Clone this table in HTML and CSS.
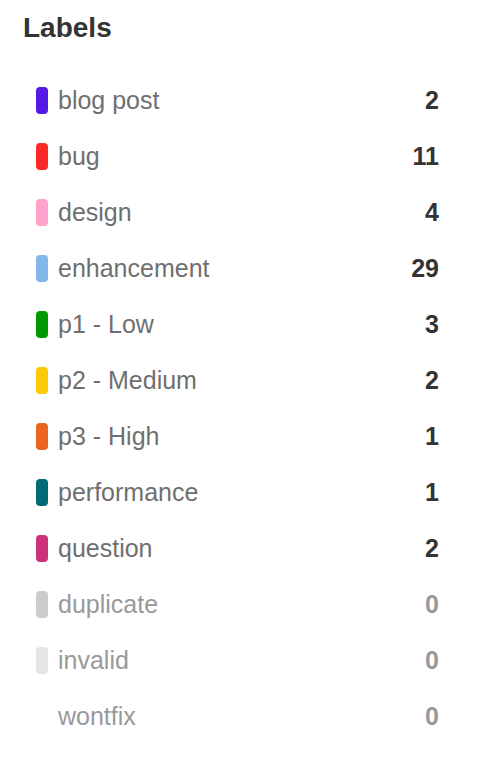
FILE: index.html
```html
<!DOCTYPE html>
<html lang="en">
<head>
<meta charset="utf-8">
<title>Labels</title>
<link rel="stylesheet" href="styles.css">
</head>
<body>
<section class="labels">
  <h2 class="labels-title">Labels</h2>
  <ul class="label-list">
    <li class="label-row"><span class="swatch c-blog"></span><span class="label-name">blog post</span><span class="label-count">2</span></li>
    <li class="label-row"><span class="swatch c-bug"></span><span class="label-name">bug</span><span class="label-count">11</span></li>
    <li class="label-row"><span class="swatch c-design"></span><span class="label-name">design</span><span class="label-count">4</span></li>
    <li class="label-row"><span class="swatch c-enh"></span><span class="label-name">enhancement</span><span class="label-count">29</span></li>
    <li class="label-row"><span class="swatch c-p1"></span><span class="label-name">p1 - Low</span><span class="label-count">3</span></li>
    <li class="label-row"><span class="swatch c-p2"></span><span class="label-name">p2 - Medium</span><span class="label-count">2</span></li>
    <li class="label-row"><span class="swatch c-p3"></span><span class="label-name">p3 - High</span><span class="label-count">1</span></li>
    <li class="label-row"><span class="swatch c-perf"></span><span class="label-name">performance</span><span class="label-count">1</span></li>
    <li class="label-row"><span class="swatch c-question"></span><span class="label-name">question</span><span class="label-count">2</span></li>
    <li class="label-row is-empty"><span class="swatch c-dup"></span><span class="label-name">duplicate</span><span class="label-count">0</span></li>
    <li class="label-row is-empty"><span class="swatch c-invalid"></span><span class="label-name">invalid</span><span class="label-count">0</span></li>
    <li class="label-row is-empty"><span class="swatch c-wontfix"></span><span class="label-name">wontfix</span><span class="label-count">0</span></li>
  </ul>
</section>
</body>
</html>
```

FILE: styles.css
```css
html, body {
  margin: 0;
  padding: 0;
  background: #ffffff;
}

body {
  font-family: "Liberation Sans", Arial, Helvetica, sans-serif;
}

.labels {
  padding: 12px 43px 0 23px;
}

.labels-title {
  margin: 0;
  font-size: 28px;
  line-height: 32px;
  font-weight: bold;
  color: #333333;
}

.label-list {
  list-style: none;
  margin: 28px 0 0 0;
  padding: 0 0 0 13px;
}

.label-row {
  display: flex;
  align-items: center;
  height: 56px;
  font-size: 25px;
}

.swatch {
  flex: 0 0 12px;
  width: 12px;
  height: 27px;
  border-radius: 4px;
  margin-right: 10px;
}

.label-name {
  flex: 1 1 auto;
  color: #6f6f6f;
}

.label-count {
  font-weight: bold;
  color: #333333;
}

.is-empty .label-name,
.is-empty .label-count {
  color: #999999;
}

.c-blog { background: #5319e7; }
.c-bug { background: #fc2929; }
.c-design { background: #ffa3cc; }
.c-enh { background: #84b6eb; }
.c-p1 { background: #009800; }
.c-p2 { background: #fbca04; }
.c-p3 { background: #eb6420; }
.c-perf { background: #006b75; }
.c-question { background: #cc317c; }
.c-dup { background: #cccccc; }
.c-invalid { background: #e6e6e6; }
.c-wontfix { background: #ffffff; }
```
